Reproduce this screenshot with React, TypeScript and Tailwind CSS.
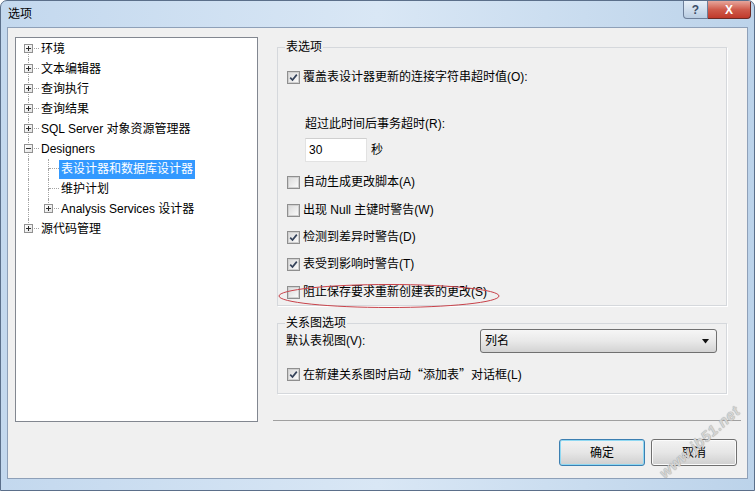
import React from "react";

type Node = {
  label: string;
  level: 0 | 1;
  box?: "+" | "-";
  selected?: boolean;
};

const tree: Node[] = [
  { label: "环境", level: 0, box: "+" },
  { label: "文本编辑器", level: 0, box: "+" },
  { label: "查询执行", level: 0, box: "+" },
  { label: "查询结果", level: 0, box: "+" },
  { label: "SQL Server 对象资源管理器", level: 0, box: "+" },
  { label: "Designers", level: 0, box: "-" },
  { label: "表设计器和数据库设计器", level: 1, selected: true },
  { label: "维护计划", level: 1 },
  { label: "Analysis Services 设计器", level: 1, box: "+" },
  { label: "源代码管理", level: 0, box: "+" },
];

const ExpandBox = ({ sign }: { sign: "+" | "-" }) => (
  <span className="absolute left-[5px] top-[5px] w-[9px] h-[9px] border border-[#919191] bg-gradient-to-br from-white to-[#e4e4e4] flex items-center justify-center">
    <span className="relative w-[5px] h-[5px] flex items-center justify-center">
      <span className="absolute w-[5px] h-px bg-[#2d2d2d]" />
      {sign === "+" && <span className="absolute w-px h-[5px] bg-[#2d2d2d]" />}
    </span>
  </span>
);

const TreeCol = ({
  up,
  down,
  across,
  box,
}: {
  up: boolean;
  down: boolean;
  across: boolean;
  box?: "+" | "-";
}) => (
  <span className="relative w-[20px] h-[20px] shrink-0">
    {up && <span className="absolute left-[9px] top-0 h-[10px] border-l border-dotted border-[#a3a3a3]" />}
    {down && <span className="absolute left-[9px] top-[10px] h-[10px] border-l border-dotted border-[#a3a3a3]" />}
    {across && <span className="absolute left-[10px] top-[9px] w-[10px] border-t border-dotted border-[#a3a3a3]" />}
    {box && <ExpandBox sign={box} />}
  </span>
);

const TreeView = () => {
  const lastRoot = tree.length - 1;
  const lastChild = 8;
  return (
    <div className="w-[243px] h-[385px] mt-[9px] pt-px border border-[#828790] bg-white">
      {tree.map((n, i) => (
        <div key={n.label} className="flex items-center h-[20px] pl-[3px]">
          {n.level === 0 ? (
            <TreeCol up={i > 0} down={i < lastRoot} across box={n.box} />
          ) : (
            <>
              <TreeCol up down across={false} />
              <TreeCol up down={i < lastChild} across box={n.box} />
            </>
          )}
          <span
            className={
              n.selected
                ? "h-[19px] leading-[19px] px-[2px] bg-[#3399ff] text-white whitespace-nowrap"
                : "h-[19px] leading-[19px] px-[2px] whitespace-nowrap"
            }
          >
            {n.label}
          </span>
        </div>
      ))}
    </div>
  );
};

const CheckBox = ({ checked }: { checked?: boolean }) => (
  <span className="w-[13px] h-[13px] border border-[#8f8f8f] bg-[#f4f4f4] flex items-center justify-center shrink-0">
    <span className="w-[11px] h-[11px] border border-[#d0d0d0] bg-gradient-to-br from-[#dcdcdc] to-[#fafafa] flex items-center justify-center">
      {checked && (
        <svg width="9" height="9" viewBox="0 0 9 9">
          <path d="M1.2 4.6 L3.5 7 L7.8 1.6" fill="none" stroke="#34425a" strokeWidth="1.7" />
        </svg>
      )}
    </span>
  </span>
);

const CheckRow = ({
  label,
  checked,
  className,
}: {
  label: React.ReactNode;
  checked?: boolean;
  className?: string;
}) => (
  <div className={"flex items-center h-[14px] pl-[9px] " + (className ?? "")}>
    <CheckBox checked={checked} />
    <span className="ml-[3px] leading-[14px] whitespace-nowrap">{label}</span>
  </div>
);

const Button = ({ label, isDefault }: { label: string; isDefault?: boolean }) => (
  <button
    className={
      isDefault
        ? "w-[86px] h-[27px] rounded-[3px] border border-[#3c7fb1] shadow-[inset_0_0_0_1px_#8fd8f2] bg-gradient-to-b from-[#f2f2f2] via-[#e6e6e6] to-[#cfcfcf] text-[12px] text-black"
        : "w-[86px] h-[27px] rounded-[3px] border border-[#707070] shadow-[inset_0_0_0_1px_#fbfbfb] bg-gradient-to-b from-[#f2f2f2] via-[#e6e6e6] to-[#cfcfcf] text-[12px] text-black"
    }
  >
    {label}
  </button>
);

export default function App() {
  return (
    <div className="relative w-[755px] h-[491px] flex flex-col overflow-hidden rounded-t-[7px] border border-[#5b6f8a] bg-gradient-to-r from-[#c3d8ee] via-[#d9e7f5] to-[#bcd3ea] text-[12px] leading-[14px] text-black font-['Liberation_Sans','Noto_Sans_CJK_SC',sans-serif]">
      {/* title bar */}
      <div className="h-[26px] flex items-center pl-[7px] shrink-0">
        <span className="text-[12px]">选项</span>
      </div>
      <div className="absolute top-0 right-[3px] flex">
        <div className="w-[25px] h-[18px] rounded-bl-[4px] border border-t-0 border-[#6d7f99] bg-gradient-to-b from-[#e8f0f8] to-[#b9cde2] flex items-center justify-center text-[12px] font-bold text-[#3c4e68]">
          ?
        </div>
        <div className="w-[43px] h-[18px] rounded-br-[4px] border border-t-0 border-l-0 border-[#6b2a25] bg-gradient-to-b from-[#e6a59b] via-[#cf5b4c] to-[#c0392b] flex items-center justify-center text-[12px] font-bold text-white">
          X
        </div>
      </div>

      {/* client area */}
      <div className="flex-1 ml-[6px] mr-[6px] mb-[11px] border border-[#8ea0b8] bg-[#f0f0f0] flex flex-col">
        <div className="flex pl-[7px] h-[394px]">
          <TreeView />

          <div className="ml-[15px] mt-[1px] w-[468px] h-[392px] border-b border-[#a0a0a0] pt-[11px] pl-[4px]">
            <fieldset className="w-[450px] border border-[#d5d8dc] shadow-[1px_1px_0_#ffffff] pb-[6px] flex flex-col">
              <legend className="ml-[7px] px-px leading-[14px]">表选项</legend>
              <CheckRow className="mt-[16px]" checked label="覆盖表设计器更新的连接字符串超时值(O):" />
              <div className="mt-[33px] pl-[27px] leading-[14px]">超过此时间后事务超时(R):</div>
              <div className="mt-[7px] pl-[27px] flex items-center">
                <div className="w-[62px] h-[24px] border border-[#e2e2e2] border-t-[#cfcfcf] bg-white pl-[3px] flex items-center">
                  30
                </div>
                <span className="ml-[4px]">秒</span>
              </div>
              <CheckRow className="mt-[13px]" label="自动生成更改脚本(A)" />
              <CheckRow className="mt-[14px]" label="出现 Null 主键时警告(W)" />
              <CheckRow className="mt-[13px]" checked label="检测到差异时警告(D)" />
              <CheckRow className="mt-[13px]" checked label="表受到影响时警告(T)" />
              <CheckRow className="mt-[14px]" label="阻止保存要求重新创建表的更改(S)" />
            </fieldset>

            <fieldset className="mt-[10px] w-[450px] border border-[#d5d8dc] shadow-[1px_1px_0_#ffffff] pb-[12px] flex flex-col">
              <legend className="ml-[7px] px-px leading-[14px]">关系图选项</legend>
              <div className="-mt-[1px] h-[24px] flex items-center pl-[8px] pr-[9px]">
                <span>默认表视图(V):</span>
                <div className="ml-auto w-[237px] h-[24px] rounded-[3px] border border-[#707070] bg-gradient-to-b from-[#f6f6f6] via-[#e9e9e9] to-[#d3d3d3] flex items-center pl-[4px] pr-[6px]">
                  <span>列名</span>
                  <svg className="ml-auto" width="8" height="5" viewBox="0 0 8 5">
                    <path d="M0 0 H7 L3.5 4.5 Z" fill="#111" />
                  </svg>
                </div>
              </div>
              <CheckRow
                className="mt-[14px]"
                checked
                label={
                  <>
                    在新建关系图时启动
                    <span className="font-['Noto_Sans_CJK_SC',sans-serif]">“添加表”</span>
                    对话框(L)
                  </>
                }
              />
            </fieldset>
          </div>
        </div>

        <div className="mt-auto mb-[12px] flex justify-end gap-[6px] pr-[10px]">
          <Button label="确定" isDefault />
          <Button label="取消" />
        </div>
      </div>

      {/* red highlight around the option */}
      <svg className="absolute left-[276px] top-[282px]" width="224" height="26" viewBox="0 0 224 26">
        <ellipse cx="112" cy="13" rx="110" ry="11.5" fill="none" stroke="#c8424a" strokeWidth="1" />
      </svg>

      {/* watermark */}
      <span className="absolute left-[648px] top-[434px] -rotate-[41deg] text-[15px] font-bold italic tracking-[0.5px] text-[#d4d4d4] [text-shadow:0_0_1px_#8a8a8a]">
        www.jb51.net
      </span>
    </div>
  );
}
